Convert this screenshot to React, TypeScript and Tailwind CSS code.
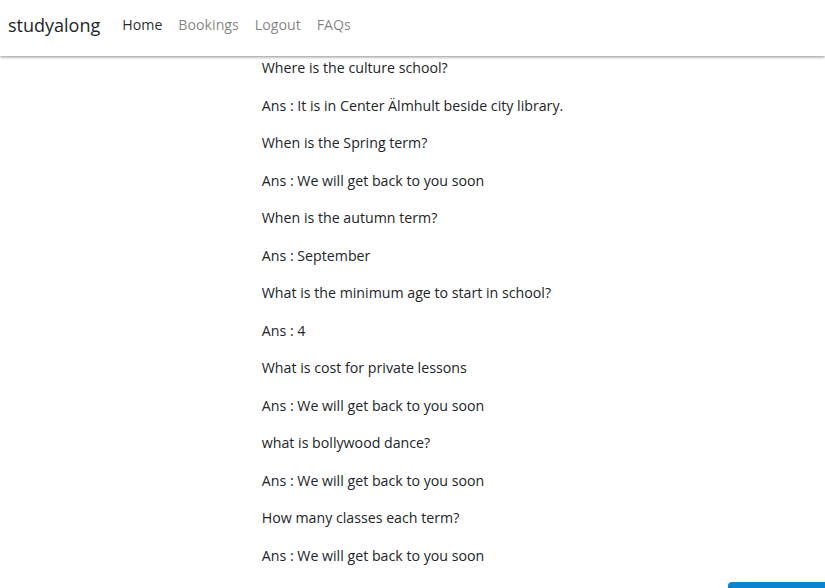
import React from 'react'

const faqs = [
  ['Where is the culture school?', 'It is in Center Älmhult beside city library.'],
  ['When is the Spring term?', 'We will get back to you soon'],
  ['When is the autumn term?', 'September'],
  ['What is the minimum age to start in school?', '4'],
  ['What is cost for private lessons', 'We will get back to you soon'],
  ['what is bollywood dance?', 'We will get back to you soon'],
  ['How many classes each term?', 'We will get back to you soon'],
]

export default function App() {
  return (
    <div className="min-h-screen bg-white text-[#212529] font-['Open_Sans',sans-serif] overflow-hidden">
      <nav className="flex items-center h-[56px] px-2 pb-[6px] bg-white shadow-[0_1px_3px_rgba(0,0,0,0.45)]">
        <span className="text-[18px] mr-[22px] text-[#212529]">studyalong</span>
        <div className="flex gap-[16px] text-[14.2px]">
          <a className="text-black/85">Home</a>
          <a className="text-black/50">Bookings</a>
          <a className="text-black/50">Logout</a>
          <a className="text-black/50">FAQs</a>
        </div>
      </nav>
      <div className="mx-auto w-fit pt-[1px] text-[14.2px]">
        {faqs.map(([q, a]) => (
          <div key={q}>
            <p className="leading-[22px] mb-[15.5px]">{q}</p>
            <p className="leading-[22px] mb-[15.5px]">Ans : {a}</p>
          </div>
        ))}
      </div>
      <div className="flex justify-end">
        <button className="w-[97px] h-[38px] rounded-l-[4px] bg-[#0a84cf] text-white"></button>
      </div>
    </div>
  )
}
